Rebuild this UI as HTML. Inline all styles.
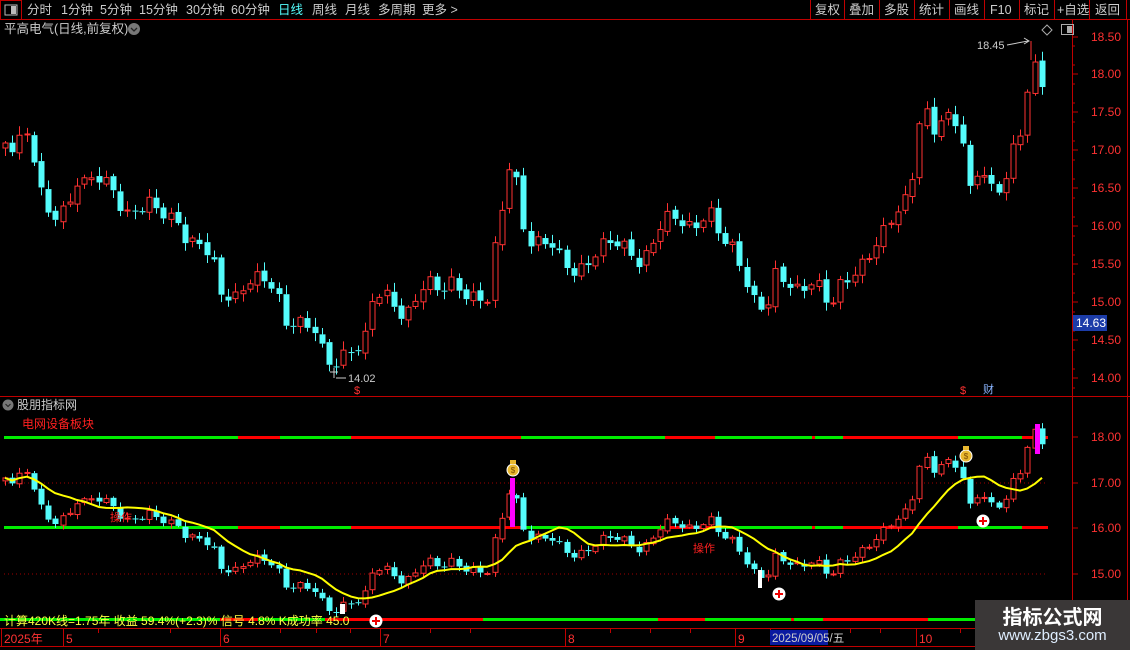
<!DOCTYPE html>
<html><head><meta charset="utf-8"><style>
body{margin:0;background:#000;width:1130px;height:650px;overflow:hidden;font-family:"Liberation Sans","Noto Sans CJK SC",sans-serif;}
svg{position:absolute;left:0;top:0}
.t{position:absolute;white-space:nowrap;font-size:12px}
</style></head><body>
<svg id="s" width="1130" height="650" xmlns="http://www.w3.org/2000/svg" font-family="Liberation Sans, Noto Sans CJK SC, sans-serif">
<g id="g"></g>
</svg>
<div class="t" style="left:975px;top:600px;width:155px;height:50px;background:#3a3737"></div>
<div class="t" style="left:975px;top:601px;width:155px;text-align:center;color:#fff;font-weight:bold;font-size:20px">指标公式网</div>
<div class="t" style="left:975px;top:627px;width:155px;text-align:center;color:#dfeeff;font-size:15px">www.zbgs3.com</div>
<script>
var g=document.getElementById('g'),h='';
function R(x,y,w,hh,f,st){h+='<rect x="'+x+'" y="'+y+'" width="'+w+'" height="'+hh+'" fill="'+f+'"'+(st?' stroke="'+st+'" stroke-width="1"':'')+'/>';}
function L(x1,y1,x2,y2,c,w,d){h+='<line x1="'+x1+'" y1="'+y1+'" x2="'+x2+'" y2="'+y2+'" stroke="'+c+'" stroke-width="'+(w||1)+'"'+(d?' stroke-dasharray="'+d+'"':'')+'/>';}
function T(x,y,s,c,fs,a){h+='<text x="'+x+'" y="'+y+'" fill="'+c+'" font-size="'+(fs||12)+'"'+(a?' text-anchor="'+a+'"':'')+'>'+s+'</text>';}
L(0,19.5,1130,19.5,'#c00000');
h+='<rect x="0.5" y="0.5" width="21" height="19" fill="none" stroke="#c00000"/>';
R(5,5,12,10,'none','#bbb');R(11,6,5,8,'#bbb');
var m=[['分时',27],['1分钟',61],['5分钟',100],['15分钟',139],['30分钟',186],['60分钟',231],['日线',278],['周线',312],['月线',345],['多周期',378],['更多 >',422]];
m.forEach(function(a){T(a[1],14,a[0],a[0]=='日线'?'#54fcfc':'#ccc',12.5);});
var b=[['复权',815],['叠加',849],['多股',884],['统计',919],['画线',954],['F10',990],['标记',1024],['+自选',1057],['返回',1095]];
[810,844,879,914,949,984,1019,1054,1089,1126].forEach(function(x){L(x+.5,0,x+.5,19,'#c00000');});
b.forEach(function(a){T(a[1],14,a[0],'#ccc',12.5);});
L(1072.5,20,1072.5,628,'#c00000');L(1127.5,20,1127.5,628,'#c00000');
L(0,396.5,1130,396.5,'#c00000');L(0,628.5,1130,628.5,'#c00000');L(0,646.5,1130,646.5,'#c00000');
T(4,33,'平高电气(日线,前复权)','#ccc',12.5);
h+='<circle cx="134" cy="29" r="6" fill="#777"/><path d="M131 28 L134 31 L137 28" stroke="#222" fill="none" stroke-width="1.3"/>';
h+='<path d="M1047 25 L1052 30 L1047 35 L1042 30Z" fill="none" stroke="#aaa"/>';
R(1061.5,24.5,12,10,'none','#aaa');R(1067,26,5,7,'#aaa');
var ax=[['18.50',37],['18.00',74],['17.50',112],['17.00',150],['16.50',188],['16.00',226],['15.50',264],['15.00',302],['14.50',340],['14.00',378]];
ax.forEach(function(a){L(1072,a[1],1078,a[1],'#c00000');T(1091,a[1]+4,a[0],'#ff3232',12);});
for(var y=46;y<390;y+=19)L(1072,y,1075,y,'#c00000');
R(1073,315,34,16,'#1c3ca8');T(1076,327,'14.63','#fff',12);
var ax2=[['18.00',437],['17.00',483],['16.00',528],['15.00',574]];
ax2.forEach(function(a){L(1072,a[1],1078,a[1],'#c00000');T(1091,a[1]+4,a[0],'#ff3232',12);L(4,a[1],1048,a[1],'#a00000',1,'1 3');});
var P=[[5,140],[12,145],[20,140],[28,135],[36,170],[44,210],[52,215],[60,210],[68,205],[76,180],[84,185],[92,180],[100,180],[108,185],[116,190],[124,215],[132,210],[140,210],[148,205],[156,210],[164,215],[172,218],[180,220],[188,245],[196,240],[204,250],[212,260],[220,295],[228,295],[236,295],[244,285],[252,275],[260,280],[268,285],[276,290],[284,325],[292,320],[300,320],[308,325],[316,330],[324,360],[332,370],[340,360],[348,350],[356,345],[364,340],[372,300],[380,295],[388,300],[396,310],[404,318],[412,305],[420,285],[428,280],[436,290],[444,290],[452,285],[460,290],[468,295],[476,295],[488,298],[496,240],[504,200],[512,150],[520,215],[528,240],[536,240],[544,240],[552,245],[560,260],[568,270],[576,275],[584,265],[592,255],[600,245],[608,240],[616,245],[624,250],[632,255],[640,265],[648,250],[656,230],[664,220],[672,215],[680,225],[688,230],[696,225],[704,215],[712,210],[720,235],[728,245],[736,255],[744,280],[752,300],[760,305],[768,300],[776,270],[784,280],[792,290],[800,295],[808,285],[816,280],[824,295],[832,300],[840,285],[848,280],[856,275],[864,265],[872,250],[880,235],[888,220],[896,210],[904,205],[912,180],[920,120],[928,115],[936,135],[944,105],[952,125],[960,115],[968,200],[976,175],[984,175],[992,190],[1000,185],[1008,170],[1016,135],[1024,130],[1030,65],[1038,75],[1046,95]];
function f(x){for(var i=1;i<P.length;i++){if(x<=P[i][0]){var a=P[i-1],c=P[i];return a[1]+(c[1]-a[1])*(x-a[0])/(c[0]-a[0]);}}return P[P.length-1][1];}
var C=[],O=[],X=[];var k=0;for(var x=5;x<=1047;x+=7.2){X.push(x);var base=f(x);C.push(base+Math.sin(k*2.1)*6+Math.cos(k*0.77)*3);O.push(k?C[k-1]+Math.sin(k*3.3)*2:base+8);k++;}
function ly(y){return 437+((y-37)/75.8-0.5)*45.5;}
function candle(x,o,c,map,i){var up=c<o;var top=Math.min(o,c),bot=Math.max(o,c);if(bot-top<1)bot=top+1;
 var hi=top-2-Math.abs(Math.sin(i*2.3))*7,lo=bot+2+Math.abs(Math.cos(i*1.9))*6;
 if(map){top=ly(top);bot=ly(bot);hi=ly(hi);lo=ly(lo);}
 var col=up?'#ff3232':'#54fcfc';var xc=Math.round(x)+.5;
 L(xc,hi,xc,top,col);L(xc,bot,xc,lo,col);
 if(up)R(xc-2.5,top,5,Math.max(bot-top,1),'#000',col);else R(xc-3,top,6,Math.max(bot-top,1),col);}
for(var i=0;i<C.length;i++){candle(X[i],O[i],C[i],false,i);}
L(334,368,334,378,'#ccc');L(330,372,338,372,'#ccc');T(348,382,'14.02','#ccc',11);L(336,378,346,378,'#ccc');
T(977,49,'18.45','#ccc',11);h+='<path d="M1007 45 L1028 41 M1024 38 L1029 41 L1024 44" stroke="#ccc" fill="none"/>';L(1031,41,1031,60,'#ff3232');
T(354,394,'$','#ff3232',11);T(960,394,'$','#ff3232',11);T(983,393,'财','#8ab4ff',11);
h+='<circle cx="8" cy="405" r="5.5" fill="#777"/><path d="M5.5 404 L8 406.5 L10.5 404" stroke="#222" fill="none"/>';
T(17,409,'股朋指标网','#ccc',12);T(22,428,'电网设备板块','#ff2020',12);
var seg=[[4,238,'g'],[238,280,'r'],[280,351,'g'],[351,521,'r'],[521,665,'g'],[665,715,'r'],[715,812,'g'],[812,815,'r'],[815,843,'g'],[843,958,'r'],[958,1022,'g'],[1022,1048,'r']];
seg.forEach(function(s){var c=s[2]=='g'?'#00ee00':'#ff0000';L(s[0],437.5,s[1],437.5,c,3);L(s[0],527.5,s[1],527.5,c,3);});
var seg2=[[0,220,'g'],[220,258,'r'],[258,325,'g'],[325,483,'r'],[483,658,'g'],[658,705,'r'],[705,791,'g'],[791,794,'r'],[794,823,'g'],[823,928,'r'],[928,1130,'g']];
seg2.forEach(function(s){L(s[0],619.5,s[1],619.5,s[2]=='g'?'#00ee00':'#ff0000',3);});
for(var i=0;i<C.length;i++){candle(X[i],O[i],C[i],true,i);}
var pts=[];for(var i=0;i<C.length;i++){var s=0,n=0;for(var j=Math.max(0,i-9);j<=i;j++){s+=C[j];n++;}pts.push(Math.round(X[i])+','+ly(s/n).toFixed(1));}
h+='<polyline points="'+pts.join(' ')+'" fill="none" stroke="#ffff00" stroke-width="2"/>';
R(510,478,5,49,'#ff00ff');R(1035,424,5,30,'#ff00ff');
R(758,570,4,18,'#fff');R(340,604,5,10,'#fff');
function bag(x,y){h+='<circle cx="'+x+'" cy="'+(y+3)+'" r="6" fill="#e8b830" stroke="#fff" stroke-width="1"/><rect x="'+(x-3)+'" y="'+(y-7)+'" width="6" height="4" fill="#e8b830"/><text x="'+x+'" y="'+(y+6)+'" font-size="8" fill="#7a4a00" text-anchor="middle">$</text>';}
bag(513,467);bag(966,453);
function plus(x,y){h+='<circle cx="'+x+'" cy="'+y+'" r="6.5" fill="#fff"/><path d="M'+(x-4)+' '+y+' H'+(x+4)+' M'+x+' '+(y-4)+' V'+(y+4)+'" stroke="#e00" stroke-width="2"/>';}
plus(779,594);plus(983,521);plus(376,621);
T(110,521,'操作','#ff2020',11);T(693,552,'操作','#ff2020',11);
T(4,625,'计算420K线=1.75年 收益 59.4%(+2.3)% 信号 4.8% K成功率 45.0','#ffff44',12);
[[4,'2025年'],[66,'5'],[223,'6'],[383,'7'],[568,'8'],[738,'9'],[919,'10']].forEach(function(a){L(a[0]-2.5,629,a[0]-2.5,646,'#c00000');T(a[0],643,a[1],'#ff3232',12);});
[98,170,280,316,350,430,470,610,650,690,770,850,880,960,1000,1040].forEach(function(x){L(x+.5,629,x+.5,633,'#c00000');});
R(770,630,58,15,'#0a1aa0');T(772,642,'2025/09/05/五','#ccc',11.5);
g.innerHTML=h;
</script>
</body></html>
